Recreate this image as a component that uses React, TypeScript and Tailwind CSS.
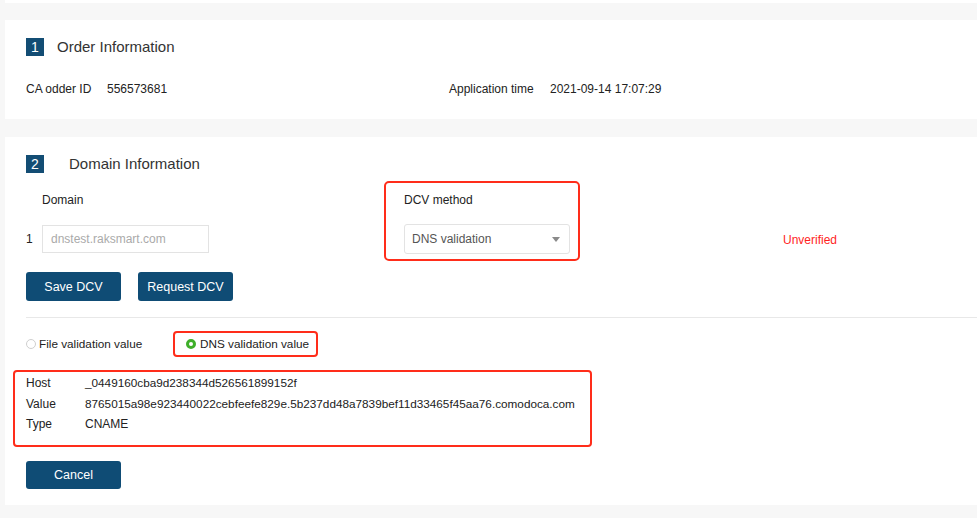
import React from "react";

const font = { fontFamily: '"Liberation Sans", Arial, Helvetica, sans-serif' };

function Badge(props: { n: string }) {
  return (
    <div className="h-[18px] w-[18px] bg-[#134d74] text-white text-[14px] leading-[18px] flex items-center justify-center">
      {props.n}
    </div>
  );
}

function Btn(props: { label: string }) {
  return (
    <button className="h-[29px] w-[95px] rounded-[3px] bg-[#0f4c75] text-white text-[12.5px] flex items-center justify-center pt-[2px]">
      {props.label}
    </button>
  );
}

function DataRow(props: { label: string; value: string; small?: boolean }) {
  return (
    <div className="flex items-baseline h-[21px]">
      <span className="w-[59px] shrink-0">{props.label}</span>
      <span className={props.small ? "text-[11.75px]" : ""}>{props.value}</span>
    </div>
  );
}

export default function App() {
  return (
    <div className="h-[518px] w-[977px] overflow-hidden bg-[#f7f7f7] text-[12px] text-[#222]" style={font}>
      <div className="ml-[5px] h-[3px] bg-white" />

      {/* card 1 */}
      <div className="ml-[5px] mt-[17px] h-[99px] bg-white pl-[21px] pt-[18px]">
        <div className="flex items-center h-[18px] gap-[13px]">
          <Badge n="1" />
          <div className="text-[15px] text-[#333]">Order Information</div>
        </div>
        <div className="mt-[25px] flex items-center leading-[16px]">
          <div className="w-[423px] flex">
            <span className="w-[81px]">CA odder ID</span>
            <span>556573681</span>
          </div>
          <div className="flex">
            <span className="w-[101px]">Application time</span>
            <span>2021-09-14 17:07:29</span>
          </div>
        </div>
      </div>

      {/* card 2 */}
      <div className="ml-[5px] mt-[18px] h-[368px] bg-white pt-[18px]">
        <div className="pl-[21px] flex items-center h-[18px] gap-[25px]">
          <Badge n="2" />
          <div className="text-[15px] text-[#333]">Domain Information</div>
        </div>

        <div className="pl-[21px] mt-[8px] flex items-start leading-[16px]">
          <div className="w-[358px] pt-[11px]">
            <div className="pl-[16px] font-medium text-[#222]">Domain</div>
            <div className="mt-[17px] flex items-center">
              <span className="w-[16px]">1</span>
              <div className="h-[28px] w-[167px] border border-[#e3e3e3] flex items-center pl-[8px] text-[#aaa]">
                dnstest.raksmart.com
              </div>
            </div>
          </div>

          <div className="w-[196px] h-[80px] border-2 border-[#ff2d1a] rounded-[5px] pl-[18px] pt-[9px]">
            <div className="font-medium text-[#222]">DCV method</div>
            <div className="mt-[16px] h-[30px] w-[166px] border border-[#e3e3e3] rounded-[3px] flex items-center justify-between pl-[7px] pr-[9px] text-[#555]">
              <span>DNS validation</span>
              <svg width="8" height="5" viewBox="0 0 8 5">
                <path d="M0 0 L8 0 L4 5 Z" fill="#8a8a8a" />
              </svg>
            </div>
          </div>

          <div className="ml-[203px] pt-[51px] text-[#ff1f1f]">Unverified</div>
        </div>

        <div className="pl-[21px] mt-[11px] flex gap-[17px]">
          <Btn label="Save DCV" />
          <Btn label="Request DCV" />
        </div>

        <div className="ml-[21px] mt-[16px] border-t border-[#e8e8e8]" />

        <div className="pl-[21px] mt-[13px] flex items-center h-[26px] leading-[16px]">
          <div className="w-[147px] flex items-center gap-[3px]">
            <span className="h-[10px] w-[10px] rounded-full border border-[#cfcfcf] bg-white" />
            <span className="text-[11.75px]">File validation value</span>
          </div>
          <div className="h-[26px] w-[145px] border-2 border-[#ff2d1a] rounded-[4px] flex items-center pl-[11px] gap-[4px]">
            <span className="h-[10px] w-[10px] rounded-full border-[3px] border-[#3faf2a] bg-white" />
            <span className="text-[11.75px]">DNS validation value</span>
          </div>
        </div>

        <div className="ml-[8px] mt-[13px] h-[77px] w-[579px] border-2 border-[#ff2d1a] rounded-[4px] pl-[11px] leading-[21px]">
          <DataRow label="Host" value="_0449160cba9d238344d526561899152f" small />
          <DataRow
            label="Value"
            value="8765015a98e923440022cebfeefe829e.5b237dd48a7839bef11d33465f45aa76.comodoca.com"
            small
          />
          <DataRow label="Type" value="CNAME" />
        </div>

        <div className="pl-[21px] mt-[14px]">
          <button className="h-[28px] w-[95px] rounded-[3px] bg-[#0f4c75] text-white text-[12.5px] flex items-center justify-center pt-[1px]">
            Cancel
          </button>
        </div>
      </div>
    </div>
  );
}
